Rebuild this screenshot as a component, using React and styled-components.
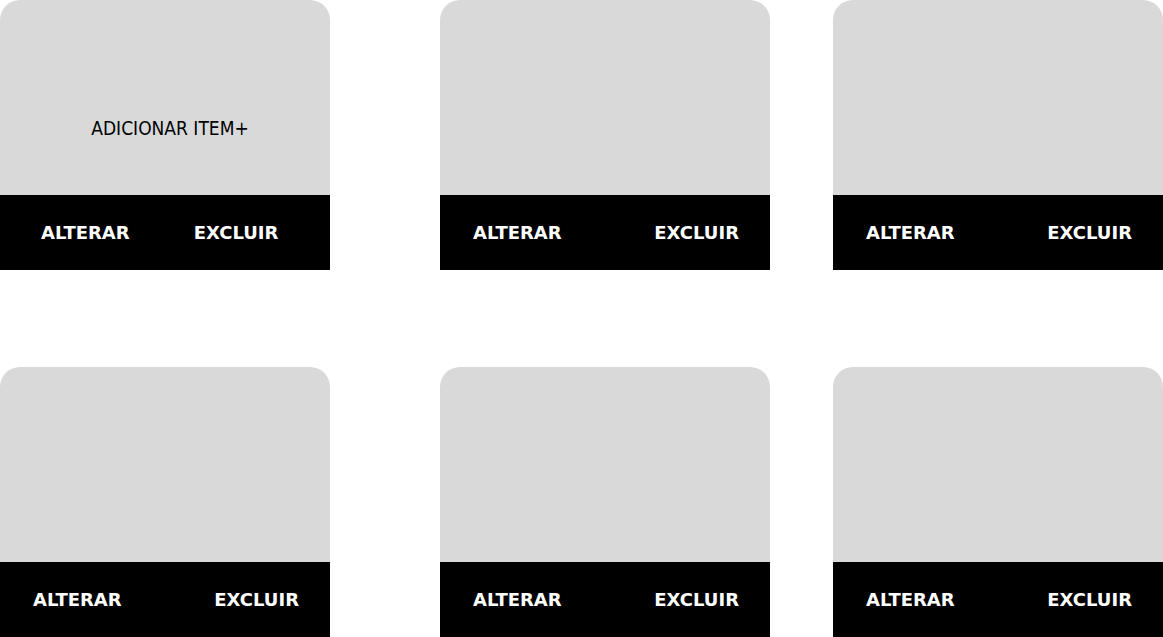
import styled, { createGlobalStyle } from "styled-components";

const GlobalStyle = createGlobalStyle`
  body {
    margin: 0;
    background: #fff;
    font-family: Roboto, "Liberation Sans", sans-serif;
  }
`;

const Grid = styled.div`
  display: grid;
  grid-template-columns: 440px 393px 330px;
  row-gap: 97px;
  width: 1163px;
`;

const Card = styled.div`
  width: 330px;
  display: flex;
  flex-direction: column;
`;

const Preview = styled.div`
  height: 195px;
  background-color: #d9d9d9;
  border-radius: 20px 20px 0 0;
  box-sizing: border-box;
  padding-top: 117px;
  text-align: center;
  padding-left: 10px;
  color: #000;
  font-size: 19px;
  line-height: 22px;
  font-family: "DejaVu Sans Condensed", Roboto, sans-serif;
`;

const Actions = styled.div`
  height: 75px;
  background-color: #000;
  display: flex;
  align-items: center;
  justify-content: ${(p) => (p.$first ? "flex-start" : "space-between")};
  gap: ${(p) => (p.$first ? "64px" : "0")};
  padding: ${(p) => (p.$first ? "0 0 0 41px" : "0 31px 0 33px")};
  box-sizing: border-box;
`;

const ActionButton = styled.button`
  background: none;
  border: none;
  padding: 0;
  color: #fff;
  font-family: "DejaVu Sans", Verdana, sans-serif;
  font-weight: bold;
  font-size: 18px;
  line-height: 20px;
  cursor: pointer;
`;

function ItemCard({ first }) {
  return (
    <Card>
      <Preview>{first ? "ADICIONAR ITEM+" : null}</Preview>
      <Actions $first={first}>
        <ActionButton>ALTERAR</ActionButton>
        <ActionButton>EXCLUIR</ActionButton>
      </Actions>
    </Card>
  );
}

export default function App() {
  return (
    <>
      <GlobalStyle />
      <Grid>
        {[0, 1, 2, 3, 4, 5].map((i) => (
          <ItemCard key={i} first={i === 0} />
        ))}
      </Grid>
    </>
  );
}
